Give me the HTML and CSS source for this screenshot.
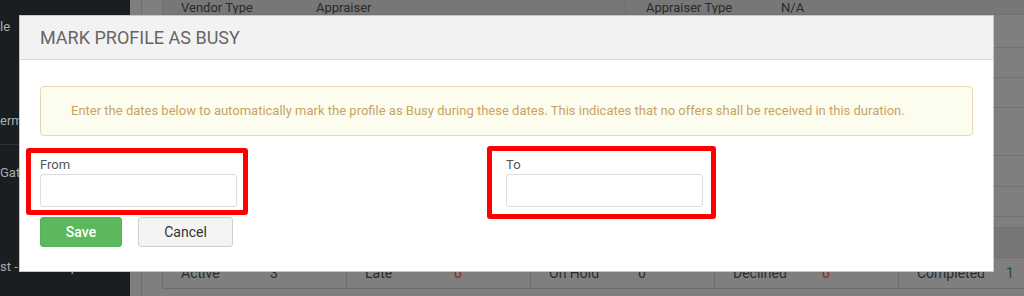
FILE: index.html
```html
<!DOCTYPE html>
<html lang="en">
<head>
  <meta charset="UTF-8" />
  <meta name="viewport" content="width=device-width, initial-scale=1.0" />
  <title>Mark Profile As Busy</title>
  <link rel="stylesheet" href="styles.css">
</head>
<body>

  <!-- page behind the dialog (dimmed) -->
  <div class="page">
    <aside class="sidebar">
      <div class="side-item side-first">le</div>
      <div class="side-item side-second">erm</div>
      <div class="side-item side-third">Gate</div>
      <div class="side-item side-last">st - Follow Up</div>
    </aside>

    <div class="content">
      <div class="panel">
        <div class="row row-head">
          <div class="half">
            <span class="key">Vendor Type</span>
            <span class="val">Appraiser</span>
          </div>
          <div class="half half-right">
            <span class="key">Appraiser Type</span>
            <span class="val">N/A</span>
          </div>
        </div>
        <div class="row h33"></div>
        <div class="row h30"></div>
        <div class="row h30"></div>
        <div class="row h48"></div>
        <div class="row h31"></div>
        <div class="row h30"></div>
        <div class="row h11"></div>
        <div class="row h30 row-dark"></div>
        <div class="stats">
          <div class="stat"><span class="stat-label">Active</span><span class="stat-val">3</span></div>
          <div class="stat"><span class="stat-label">Late</span><span class="stat-val red">0</span></div>
          <div class="stat"><span class="stat-label">On Hold</span><span class="stat-val">0</span></div>
          <div class="stat"><span class="stat-label">Declined</span><span class="stat-val red">0</span></div>
          <div class="stat"><span class="stat-label">Completed</span><span class="stat-val green">1</span></div>
        </div>
      </div>
    </div>
  </div>

  <!-- dialog -->
  <div class="modal">
    <div class="modal-header">
      <h4 class="modal-title">Mark Profile As Busy</h4>
    </div>
    <div class="modal-body">
      <div class="alert">
        Enter the dates below to automatically mark the profile as Busy during these dates. This indicates that no offers shall be received in this duration.
      </div>
      <form class="busy-form">
        <div class="form-row">
          <div class="form-col">
            <label for="fromDate">From</label>
            <input type="text" id="fromDate" name="fromDate">
          </div>
          <div class="form-col">
            <label for="toDate">To</label>
            <input type="text" id="toDate" name="toDate">
          </div>
        </div>
        <div class="actions">
          <button type="submit" class="btn btn-save">Save</button>
          <button type="button" class="btn btn-cancel">Cancel</button>
        </div>
      </form>
    </div>
  </div>

  <!-- screenshot annotations -->
  <div class="mark mark-from"></div>
  <div class="mark mark-to"></div>

</body>
</html>
```

FILE: styles.css
```css
/* Global */
* {
  box-sizing: border-box;
  margin: 0;
  padding: 0;
}
body {
  width: 1024px;
  height: 296px;
  overflow: hidden;
  position: relative;
  font-family: Roboto, "Liberation Sans", Arial, sans-serif;
  background: #7f7f7f;
}

/* Dimmed page */
.page {
  display: flex;
  height: 296px;
  overflow: hidden;
}
.sidebar {
  width: 130px;
  flex-shrink: 0;
  background: #1b1e21;
  color: #a9abad;
  font-size: 13px;
  white-space: nowrap;
  overflow: hidden;
}
.side-item {
  display: flex;
  align-items: center;
}
.side-first {
  height: 52px;
}
.side-second {
  height: 93px;
  padding-top: 44px;
  border-bottom: 1px solid #2c2f33;
}
.side-third {
  height: 54px;
}
.side-last {
  display: block;
  height: 96px;
  padding-top: 59px;
  line-height: 18px;
}

.content {
  flex: 1;
  min-width: 0;
  overflow: hidden;
  padding-left: 11px;
}
.panel {
  height: 100%;
  border-left: 1px solid #6c6c6c;
  padding-left: 20px;
}
.row {
  border-bottom: 1px solid #717171;
  border-left: 1px solid #717171;
}
.row-head {
  height: 15px;
  display: flex;
  align-items: flex-end;
  background: #777;
  font-size: 13px;
  color: #2a2a2a;
  line-height: 1;
  overflow: hidden;
}
.half {
  width: 462px;
  flex-shrink: 0;
  display: flex;
  padding-left: 18px;
  height: 100%;
  align-items: center;
  margin-top: -10px;
}
.half-right {
  border-left: 1px solid #6c6c6c;
  padding-left: 20px;
}
.key {
  width: 135px;
}
.h33 { height: 33px; }
.h30 { height: 30px; }
.h48 { height: 48px; }
.h31 { height: 31px; }
.h11 { height: 11px; }
.row-dark {
  background: #767676;
}

.stats {
  display: grid;
  grid-template-columns: repeat(5, 184px);
  height: 31px;
  border-bottom: 1px solid #6c6c6c;
  border-left: 1px solid #6c6c6c;
  font-size: 14px;
  color: #2b2b2b;
}
.stat {
  display: flex;
  align-items: center;
  padding-left: 18px;
  border-right: 1px solid #6c6c6c;
}
.stat-label {
  width: 89px;
}
.stat-val.red {
  color: #8a2525;
}
.stat-val.green {
  color: #1f4f2a;
}

/* Dialog */
.modal {
  position: absolute;
  left: 20px;
  top: 16px;
  width: 973px;
  height: 255px;
  background: #fff;
  box-shadow: 0 0 0 1px #c8c8c8;
}
.modal-header {
  height: 44px;
  display: flex;
  align-items: center;
  padding: 0 20px;
  background: #f2f2f2;
  border-bottom: 1px solid #d9d9d9;
}
.modal-title {
  font-size: 18px;
  font-weight: 400;
  text-transform: uppercase;
  color: #666;
}
.modal-body {
  padding: 26px 20px 24px;
}
.alert {
  height: 50px;
  padding: 15px 30px;
  font-size: 13px;
  line-height: 18px;
  color: #c7a366;
  background: #fdfdef;
  border: 1px solid #e5d6b4;
  border-radius: 4px;
  margin-bottom: 20px;
}
.form-row {
  display: flex;
}
.form-col {
  width: 466px;
}
label {
  display: block;
  font-size: 13px;
  line-height: 18px;
  color: #555;
}
input {
  display: block;
  width: 197px;
  height: 33px;
  border: 1px solid #ddd;
  border-radius: 3px;
  font-size: 13px;
  padding: 0 8px;
  outline: none;
}
.actions {
  display: flex;
  gap: 16px;
  margin-top: 10px;
}
.btn {
  height: 30px;
  font-family: Roboto, "Liberation Sans", Arial, sans-serif;
  font-size: 14px;
  border-radius: 3px;
  cursor: pointer;
}
.btn-save {
  width: 82px;
  background: #5cb85c;
  border: 1px solid #56b356;
  color: #fff;
  font-weight: 500;
}
.btn-cancel {
  width: 95px;
  background: #f4f4f4;
  border: 1px solid #cfcfcf;
  color: #333;
}

/* Red annotation boxes */
.mark {
  position: absolute;
  border: 5px solid #ff0000;
  border-radius: 3px;
}
.mark-from {
  left: 26px;
  top: 148px;
  width: 222px;
  height: 67px;
}
.mark-to {
  left: 487px;
  top: 146px;
  width: 229px;
  height: 73px;
}
```
